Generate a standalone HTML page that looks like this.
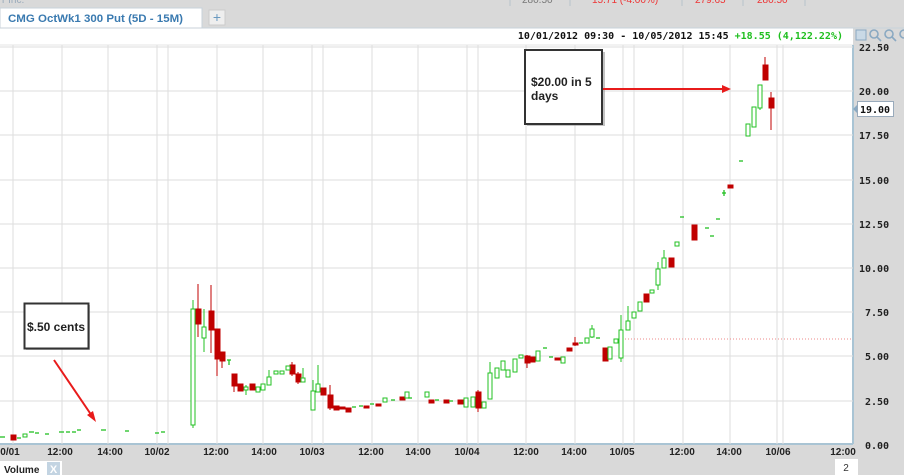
<!DOCTYPE html>
<html><head><style>
html,body{margin:0;padding:0;width:904px;height:475px;overflow:hidden;background:#d9d9d9;font-family:"Liberation Sans",sans-serif}
svg{display:block}
</style></head><body>
<svg width="904" height="475" xmlns="http://www.w3.org/2000/svg">
<rect width="904" height="475" fill="#d9d9d9"/>
<text x="2" y="3" font-size="10" fill="#9ab">r Inc.</text>
<g stroke="#b8c4cc"><line x1="510" y1="0" x2="510" y2="6"/><line x1="570" y1="0" x2="570" y2="6"/><line x1="682" y1="0" x2="682" y2="6"/><line x1="743" y1="0" x2="743" y2="6"/><line x1="805" y1="0" x2="805" y2="6"/></g>
<text x="522" y="3" font-size="10" fill="#777">280.50</text>
<text x="592" y="3" font-size="10" fill="#e33">15.71 (-4.00%)</text>
<text x="695" y="3" font-size="10" fill="#e33">279.65</text>
<text x="757" y="3" font-size="10" fill="#e33">280.50</text>
<rect x="0" y="8" width="202" height="21" fill="#fff" stroke="#c8d2da"/>
<text x="8" y="22" font-size="11" font-weight="bold" fill="#3a7ab0" textLength="175" lengthAdjust="spacingAndGlyphs">CMG OctWk1 300 Put (5D - 15M)</text>
<rect x="209" y="10" width="16" height="15" fill="#eee" stroke="#ccc"/>
<text x="217" y="22" font-size="14" fill="#6a9ac0" text-anchor="middle">+</text>
<rect x="0" y="28" width="853" height="416" fill="#fff"/>
<line x1="0" y1="28" x2="904" y2="28" fill="none" stroke="#c8d2da"/>
<line x1="0" y1="45" x2="853" y2="45" stroke="#e4e4e4"/>
<line x1="853" y1="45" x2="853" y2="444" stroke="#a9c4d4" stroke-width="2"/>
<line x1="0" y1="444" x2="853" y2="444" stroke="#a9c4d4" stroke-width="2"/>
<text x="843" y="39" font-size="10" font-weight="bold" text-anchor="end" font-family="DejaVu Sans Mono,monospace"><tspan fill="#111">10/01/2012 09:30 - 10/05/2012 15:45 </tspan><tspan fill="#1fbf1f">+18.55 (4,122.22%)</tspan></text>
<rect x="856" y="30" width="10" height="10" fill="#c9d9e6" stroke="#8aa9c2"/>
<g fill="none" stroke="#8aa9c2" stroke-width="1.6"><circle cx="874" cy="34" r="4"/><line x1="877" y1="37" x2="881" y2="41"/><circle cx="889" cy="34" r="4"/><line x1="892" y1="37" x2="896" y2="41"/><circle cx="904" cy="34" r="4"/></g>
<g stroke="#dedede" stroke-width="1">
<line x1="0" y1="47" x2="853" y2="47"/><line x1="0" y1="91" x2="853" y2="91"/><line x1="0" y1="135" x2="853" y2="135"/><line x1="0" y1="180" x2="853" y2="180"/><line x1="0" y1="224" x2="853" y2="224"/><line x1="0" y1="268" x2="853" y2="268"/><line x1="0" y1="312" x2="853" y2="312"/><line x1="0" y1="356" x2="853" y2="356"/><line x1="0" y1="401" x2="853" y2="401"/>
<line x1="13" y1="45" x2="13" y2="444"/><line x1="62" y1="45" x2="62" y2="444"/><line x1="108" y1="45" x2="108" y2="444"/><line x1="157" y1="45" x2="157" y2="444"/><line x1="168" y1="45" x2="168" y2="444"/><line x1="217" y1="45" x2="217" y2="444"/><line x1="263" y1="45" x2="263" y2="444"/><line x1="312" y1="45" x2="312" y2="444"/><line x1="323" y1="45" x2="323" y2="444"/><line x1="372" y1="45" x2="372" y2="444"/><line x1="418" y1="45" x2="418" y2="444"/><line x1="467" y1="45" x2="467" y2="444"/><line x1="478" y1="45" x2="478" y2="444"/><line x1="526" y1="45" x2="526" y2="444"/><line x1="575" y1="45" x2="575" y2="444"/><line x1="623" y1="45" x2="623" y2="444"/><line x1="634" y1="45" x2="634" y2="444"/><line x1="683" y1="45" x2="683" y2="444"/><line x1="730" y1="45" x2="730" y2="444"/><line x1="777" y1="45" x2="777" y2="444"/><line x1="783" y1="45" x2="783" y2="444"/>
</g>
<line x1="622" y1="339" x2="853" y2="339" stroke="#e88" stroke-dasharray="1,2"/>
<g stroke-width="1">
<g stroke="#c00000" fill="#c00000">
<line x1="198" y1="284" x2="198" y2="337"/><rect x="196" y="309" width="5" height="15"/>
<line x1="211" y1="285" x2="211" y2="353"/><rect x="209" y="311" width="5" height="19"/>
<line x1="217" y1="329" x2="217" y2="376"/><rect x="215" y="329" width="5" height="30"/>
<line x1="222" y1="352" x2="222" y2="368"/><rect x="220" y="352" width="5" height="9"/>
<line x1="234" y1="374" x2="234" y2="392"/><rect x="232" y="374" width="5" height="12"/>
<rect x="238" y="384" width="5" height="7"/><rect x="250" y="384" width="5" height="6"/>
<line x1="292" y1="362" x2="292" y2="376"/><rect x="290" y="365" width="5" height="9"/>
<line x1="298" y1="372" x2="298" y2="384"/><rect x="296" y="374" width="5" height="8"/>
<rect x="321" y="388" width="5" height="7"/><line x1="330" y1="385" x2="330" y2="410"/><rect x="328" y="395" width="5" height="13"/>
<rect x="334" y="406" width="5" height="4"/><rect x="340" y="407" width="5" height="2"/><rect x="346" y="408" width="5" height="4"/>
<rect x="364" y="406" width="5" height="2"/><rect x="376" y="404" width="5" height="2"/><rect x="400" y="397" width="5" height="3"/>
<rect x="429" y="400" width="5" height="3"/><rect x="444" y="400" width="5" height="3"/><rect x="458" y="400" width="5" height="4"/>
<line x1="478" y1="390" x2="478" y2="412"/><rect x="476" y="392" width="5" height="16"/>
<line x1="527" y1="355" x2="527" y2="368"/><rect x="525" y="356" width="5" height="7"/>
<rect x="530" y="357" width="5" height="5"/><rect x="555" y="358" width="5" height="2"/>
<rect x="567" y="348" width="5" height="3"/><line x1="575" y1="337" x2="575" y2="346"/><rect x="573" y="343" width="5" height="2"/>
<rect x="603" y="348" width="5" height="13"/><rect x="644" y="294" width="5" height="8"/><rect x="669" y="258" width="5" height="9"/>
<rect x="692" y="225" width="5" height="15"/><rect x="728" y="185" width="5" height="3"/>
<line x1="765" y1="57" x2="765" y2="80"/><rect x="763" y="65" width="5" height="15"/>
<line x1="771" y1="92" x2="771" y2="130"/><rect x="769" y="98" width="5" height="10"/>
<rect x="11" y="435" width="5" height="5"/>
</g>
<g stroke="#22c022" fill="#fff">
<line x1="193" y1="300" x2="193" y2="428"/><rect x="191" y="309" width="4" height="116"/>
<line x1="204" y1="309" x2="204" y2="352"/><rect x="202" y="327" width="4" height="11"/>
<line x1="246" y1="385" x2="246" y2="395"/><rect x="244" y="387" width="4" height="3"/>
<rect x="256" y="387" width="4" height="5"/><rect x="261" y="384" width="4" height="6"/>
<line x1="269" y1="370" x2="269" y2="385"/><rect x="267" y="377" width="4" height="8"/>
<rect x="274" y="371" width="4" height="3"/><rect x="280" y="371" width="4" height="3"/><rect x="286" y="366" width="4" height="4"/>
<line x1="303" y1="368" x2="303" y2="382"/><rect x="301" y="378" width="4" height="4"/>
<line x1="313" y1="380" x2="313" y2="410"/><rect x="311" y="391" width="4" height="19"/>
<line x1="318" y1="365" x2="318" y2="392"/><rect x="316" y="384" width="4" height="8"/>
<rect x="383" y="398" width="4" height="4"/><rect x="405" y="392" width="4" height="6"/><rect x="425" y="392" width="4" height="5"/>
<rect x="464" y="398" width="4" height="9"/><rect x="471" y="397" width="4" height="10"/><rect x="482" y="402" width="4" height="6"/>
<line x1="490" y1="362" x2="490" y2="399"/><rect x="488" y="373" width="4" height="26"/>
<rect x="495" y="368" width="4" height="10"/><rect x="501" y="361" width="4" height="9"/><rect x="506" y="370" width="4" height="7"/>
<rect x="513" y="359" width="4" height="13"/><rect x="519" y="355" width="4" height="3"/>
<rect x="536" y="351" width="4" height="10"/><rect x="561" y="357" width="4" height="6"/>
<rect x="585" y="338" width="4" height="5"/><line x1="592" y1="325" x2="592" y2="338"/><rect x="590" y="329" width="4" height="8"/>
<rect x="608" y="347" width="4" height="12"/><rect x="614" y="339" width="4" height="4"/>
<line x1="621" y1="315" x2="621" y2="362"/><rect x="619" y="330" width="4" height="28"/>
<line x1="628" y1="306" x2="628" y2="330"/><rect x="626" y="321" width="4" height="9"/>
<rect x="632" y="312" width="4" height="6"/><rect x="638" y="302" width="4" height="9"/><rect x="650" y="290" width="4" height="3"/>
<line x1="658" y1="262" x2="658" y2="290"/><rect x="656" y="269" width="4" height="16"/>
<line x1="664" y1="250" x2="664" y2="268"/><rect x="662" y="258" width="4" height="10"/>
<rect x="675" y="242" width="4" height="4"/>
<rect x="746" y="124" width="4" height="12"/><rect x="752" y="107" width="4" height="20"/>
<line x1="760" y1="85" x2="760" y2="110"/><rect x="758" y="85" width="4" height="23"/>
<rect x="23" y="434" width="4" height="3"/>
</g>
<g stroke="#22c022" stroke-width="1.3">
<line x1="0" y1="437" x2="5" y2="437"/><line x1="17" y1="438" x2="21" y2="438"/><line x1="29" y1="432" x2="34" y2="432"/><line x1="35" y1="433" x2="39" y2="433"/><line x1="45" y1="434" x2="49" y2="434"/><line x1="59" y1="432" x2="64" y2="432"/><line x1="66" y1="432" x2="70" y2="432"/><line x1="72" y1="432" x2="76" y2="432"/><line x1="77" y1="430" x2="81" y2="430"/><line x1="101" y1="430" x2="106" y2="430"/><line x1="125" y1="431" x2="129" y2="431"/><line x1="155" y1="433" x2="159" y2="433"/><line x1="161" y1="432" x2="165" y2="432"/>
<line x1="227" y1="360" x2="231" y2="360"/><line x1="229" y1="360" x2="229" y2="365"/>
<line x1="352" y1="407" x2="356" y2="407"/><line x1="359" y1="406" x2="363" y2="406"/><line x1="370" y1="404" x2="374" y2="404"/><line x1="391" y1="400" x2="395" y2="400"/><line x1="408" y1="398" x2="412" y2="398"/><line x1="435" y1="400" x2="439" y2="400"/><line x1="449" y1="401" x2="453" y2="401"/>
<line x1="543" y1="348" x2="547" y2="348"/><line x1="549" y1="357" x2="553" y2="357"/><line x1="579" y1="343" x2="583" y2="343"/><line x1="596" y1="338" x2="600" y2="338"/>
<line x1="680" y1="217" x2="684" y2="217"/><line x1="705" y1="228" x2="709" y2="228"/><line x1="710" y1="236" x2="714" y2="236"/><line x1="716" y1="219" x2="720" y2="219"/><line x1="722" y1="193" x2="726" y2="193"/><line x1="724" y1="190" x2="724" y2="196"/><line x1="739" y1="161" x2="743" y2="161"/>
</g>
</g>
<rect x="26" y="305" width="64" height="45" fill="#888" opacity="0.5"/>
<rect x="24.5" y="303.5" width="64" height="45" fill="#fff" stroke="#333" stroke-width="2"/>
<text x="56" y="331" font-size="12" font-weight="bold" fill="#222" text-anchor="middle">$.50 cents</text>
<line x1="54" y1="360" x2="92" y2="416" stroke="#e81b1b" stroke-width="2"/>
<polygon points="96,422 87,415 93,411" fill="#e81b1b"/>
<rect x="527" y="52" width="78" height="74" fill="#888" opacity="0.5"/>
<rect x="525" y="50" width="77" height="74" fill="#fff" stroke="#333" stroke-width="2"/>
<text x="531" y="86" font-size="12" font-weight="bold" fill="#222">$20.00 in 5</text>
<text x="531" y="100" font-size="12" font-weight="bold" fill="#222">days</text>
<line x1="603" y1="89" x2="724" y2="89" stroke="#e81b1b" stroke-width="2"/>
<polygon points="731,89 722,85 722,93" fill="#e81b1b"/>
<g font-size="10" font-weight="bold" fill="#222" font-family="DejaVu Sans Mono,monospace">
<text x="859" y="51">22.50</text><text x="859" y="95">20.00</text><text x="859" y="139">17.50</text><text x="859" y="184">15.00</text><text x="859" y="228">12.50</text><text x="859" y="272">10.00</text><text x="865" y="316">7.50</text><text x="865" y="360">5.00</text><text x="865" y="405">2.50</text><text x="865" y="449">0.00</text>
</g>
<polygon points="853,109 858,104 858,114" fill="#8aa9c2"/>
<rect x="857.5" y="101.5" width="36" height="15" fill="#fff" stroke="#9ab"/>
<text x="875" y="113" font-size="10" font-weight="bold" text-anchor="middle" font-family="DejaVu Sans Mono,monospace" fill="#111">19.00</text>
<g font-size="10" font-weight="bold" fill="#222" text-anchor="middle" font-family="Liberation Sans Narrow,Liberation Sans,sans-serif">
<text x="10" y="455">0/01</text><text x="60" y="455">12:00</text><text x="110" y="455">14:00</text><text x="157" y="455">10/02</text><text x="216" y="455">12:00</text><text x="264" y="455">14:00</text><text x="312" y="455">10/03</text><text x="371" y="455">12:00</text><text x="418" y="455">14:00</text><text x="467" y="455">10/04</text><text x="526" y="455">12:00</text><text x="574" y="455">14:00</text><text x="622" y="455">10/05</text><text x="682" y="455">12:00</text><text x="729" y="455">14:00</text><text x="778" y="455">10/06</text><text x="843" y="455">12:00</text>
</g>
<rect x="0" y="461" width="62" height="14" fill="#fff"/>
<text x="4" y="473" font-size="10" font-weight="bold" fill="#222">Volume</text>
<rect x="47" y="462" width="13" height="13" fill="#c3d4e2"/>
<text x="53.5" y="473" font-size="11" font-weight="bold" fill="#fff" text-anchor="middle">X</text>
<rect x="835" y="459" width="23" height="16" fill="#fff"/>
<text x="846" y="471" font-size="10" fill="#333" text-anchor="middle">2</text>
</svg>
</body></html>
